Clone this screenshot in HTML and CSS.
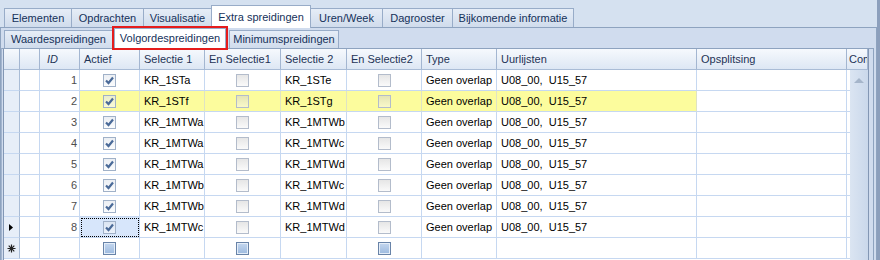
FILE: index.html
```html
<!DOCTYPE html>
<html lang="nl">
<head>
    <meta charset="UTF-8">
    <title>Extra spreidingen</title>
    <link rel="stylesheet" href="styles.css">
</head>
<body>
<div class="frame">
    <div class="tabs top-tabs">
        <div class="tab w67">Elementen</div>
        <div class="tab w73">Opdrachten</div>
        <div class="tab w69">Visualisatie</div>
        <div class="tab active w100">Extra spreidingen</div>
        <div class="tab w73">Uren/Week</div>
        <div class="tab w71">Dagrooster</div>
        <div class="tab w122">Bijkomende informatie</div>
    </div>
    <div class="outer-page">
        <div class="tabs sub-tabs">
            <div class="tab w109">Waardespreidingen</div>
            <div class="tab active marked w112">Volgordespreidingen</div>
            <div class="tab w110">Minimumspreidingen</div>
        </div>
        <div class="inner-page">
            <div class="grid">
                <table>
                    <colgroup>
                        <col style="width:16px"><col style="width:20px"><col style="width:40px"><col style="width:60px">
                        <col style="width:65px"><col style="width:76px"><col style="width:66px"><col style="width:75px">
                        <col style="width:75px"><col style="width:200px"><col style="width:150px"><col style="width:21px">
                    </colgroup>
                    <thead>
                        <tr>
                            <th></th><th></th><th class="id-head">ID</th><th>Actief</th><th>Selectie 1</th><th>En Selectie1</th>
                            <th>Selectie 2</th><th>En Selectie2</th><th>Type</th><th>Uurlijsten</th><th>Opsplitsing</th><th class="clip">Com</th>
                        </tr>
                    </thead>
                    <tbody>
                        <tr>
                            <td class="ind"></td><td></td><td class="num">1</td>
                            <td class="c"><span class="cb on"><svg viewBox="0 0 11 11"><path d="M2 5.5 L4.5 8 L9 2.5"/></svg></span></td>
                            <td>KR_1STa</td><td class="c"><span class="cb"></span></td>
                            <td>KR_1STe</td><td class="c"><span class="cb"></span></td>
                            <td>Geen overlap</td><td>U08_00,&nbsp; U15_57</td><td></td><td></td>
                        </tr>
                        <tr class="warn">
                            <td class="ind"></td><td></td><td class="num">2</td>
                            <td class="c hl"><span class="cb on"><svg viewBox="0 0 11 11"><path d="M2 5.5 L4.5 8 L9 2.5"/></svg></span></td>
                            <td class="hl">KR_1STf</td><td class="c hl"><span class="cb"></span></td>
                            <td class="hl">KR_1STg</td><td class="c hl"><span class="cb"></span></td>
                            <td class="hl">Geen overlap</td><td class="hl">U08_00,&nbsp; U15_57</td><td></td><td></td>
                        </tr>
                        <tr>
                            <td class="ind"></td><td></td><td class="num">3</td>
                            <td class="c"><span class="cb on"><svg viewBox="0 0 11 11"><path d="M2 5.5 L4.5 8 L9 2.5"/></svg></span></td>
                            <td>KR_1MTWa</td><td class="c"><span class="cb"></span></td>
                            <td>KR_1MTWb</td><td class="c"><span class="cb"></span></td>
                            <td>Geen overlap</td><td>U08_00,&nbsp; U15_57</td><td></td><td></td>
                        </tr>
                        <tr>
                            <td class="ind"></td><td></td><td class="num">4</td>
                            <td class="c"><span class="cb on"><svg viewBox="0 0 11 11"><path d="M2 5.5 L4.5 8 L9 2.5"/></svg></span></td>
                            <td>KR_1MTWa</td><td class="c"><span class="cb"></span></td>
                            <td>KR_1MTWc</td><td class="c"><span class="cb"></span></td>
                            <td>Geen overlap</td><td>U08_00,&nbsp; U15_57</td><td></td><td></td>
                        </tr>
                        <tr>
                            <td class="ind"></td><td></td><td class="num">5</td>
                            <td class="c"><span class="cb on"><svg viewBox="0 0 11 11"><path d="M2 5.5 L4.5 8 L9 2.5"/></svg></span></td>
                            <td>KR_1MTWa</td><td class="c"><span class="cb"></span></td>
                            <td>KR_1MTWd</td><td class="c"><span class="cb"></span></td>
                            <td>Geen overlap</td><td>U08_00,&nbsp; U15_57</td><td></td><td></td>
                        </tr>
                        <tr>
                            <td class="ind"></td><td></td><td class="num">6</td>
                            <td class="c"><span class="cb on"><svg viewBox="0 0 11 11"><path d="M2 5.5 L4.5 8 L9 2.5"/></svg></span></td>
                            <td>KR_1MTWb</td><td class="c"><span class="cb"></span></td>
                            <td>KR_1MTWc</td><td class="c"><span class="cb"></span></td>
                            <td>Geen overlap</td><td>U08_00,&nbsp; U15_57</td><td></td><td></td>
                        </tr>
                        <tr>
                            <td class="ind"></td><td></td><td class="num">7</td>
                            <td class="c"><span class="cb on"><svg viewBox="0 0 11 11"><path d="M2 5.5 L4.5 8 L9 2.5"/></svg></span></td>
                            <td>KR_1MTWb</td><td class="c"><span class="cb"></span></td>
                            <td>KR_1MTWd</td><td class="c"><span class="cb"></span></td>
                            <td>Geen overlap</td><td>U08_00,&nbsp; U15_57</td><td></td><td></td>
                        </tr>
                        <tr>
                            <td class="ind"><svg class="arrow" viewBox="0 0 4 7"><path d="M0 0 L4 3.5 L0 7 Z"/></svg></td><td></td><td class="num">8</td>
                            <td class="c focus"><span class="cb on"><svg viewBox="0 0 11 11"><path d="M2 5.5 L4.5 8 L9 2.5"/></svg></span></td>
                            <td>KR_1MTWc</td><td class="c"><span class="cb"></span></td>
                            <td>KR_1MTWd</td><td class="c"><span class="cb"></span></td>
                            <td>Geen overlap</td><td>U08_00,&nbsp; U15_57</td><td></td><td></td>
                        </tr>
                        <tr>
                            <td class="ind"><svg class="star" viewBox="0 0 9 9"><path d="M4.5 0.5 V8.5 M0.5 4.5 H8.5 M1.7 1.7 L7.3 7.3 M7.3 1.7 L1.7 7.3"/></svg></td><td></td><td></td>
                            <td class="c"><span class="cb null"></span></td>
                            <td></td><td class="c"><span class="cb null"></span></td>
                            <td></td><td class="c"><span class="cb null"></span></td>
                            <td></td><td></td><td></td><td></td>
                        </tr>
                    </tbody>
                </table>
                <div class="vscroll"><span class="up"></span></div>
            </div>
        </div>
    </div>
</div>
</body>
</html>
```

FILE: styles.css
```css
body {
    margin: 0;
    background: #d5e1f0;
    font-family: "Liberation Sans", Arial, sans-serif;
    font-size: 11px;
    color: #000;
}
.frame {
    width: 877px;
    height: 260px;
    border-right: 3px solid #8c9fbc;
    overflow: hidden;
}
.tabs {
    display: flex;
    align-items: flex-end;
}
.top-tabs {
    height: 23px;
    padding: 4px 0 0 4px;
}
.tab {
    box-sizing: border-box;
    height: 19px;
    line-height: 18px;
    padding: 0 2px;
    border: 1px solid #98acc8;
    border-bottom: none;
    margin-right: -1px;
    background: linear-gradient(#e6edf7, #d0dcec);
    color: #15315a;
    white-space: nowrap;
    text-align: center;
}
.tab.active {
    height: 23px;
    line-height: 21px;
    background: #fff;
    position: relative;
    z-index: 2;
    margin-bottom: -1px;
}
.top-tabs .tab.active {
    line-height: 22px;
}
.w67 { width: 68px; }
.w69 { width: 69px; }
.w71 { width: 71px; }
.w73 { width: 73px; }
.w100 { width: 100px; }
.w122 { width: 122px; }
.w109 { width: 109px; }
.w110 { width: 110px; }
.w112 { width: 112px; }
.outer-page {
    border-top: 1px solid #8ea3bf;
    border-left: 1px solid #8ea3bf;
    border-right: 1px solid #8ea3bf;
    background: #d0dcee;
    height: 240px;
}
.sub-tabs {
    height: 20px;
    padding: 0 0 0 3px;
}
.sub-tabs .tab {
    height: 18px;
    line-height: 17px;
}
.sub-tabs .tab.active {
    height: 20px;
    line-height: 19px;
}
.tab.marked {
    outline: 2px solid #e51c1c;
    outline-offset: 0;
    margin: 0 3px 0 2px;
}
.inner-page {
    border-top: 1px solid #8ea3bf;
    border-left: 1px solid #a3b5cf;
    border-right: 1px solid #8ea3bf;
    margin-right: 2px;
    padding: 0 4px 0 1px;
    height: 230px;
}
.grid {
    position: relative;
    width: 864px;
    border-left: 1px solid #8397b4;
    border-right: 1px solid #8397b4;
    background: #fff;
    overflow: hidden;
    height: 230px;
}
table {
    table-layout: fixed;
    width: 864px;
    border-collapse: separate;
    border-spacing: 0;
}
th, td {
    height: 21px;
    box-sizing: border-box;
    padding: 0 4px;
    border-right: 1px solid #c6d8f1;
    border-bottom: 1px solid #c6d8f1;
    white-space: nowrap;
    overflow: hidden;
    text-align: left;
    line-height: 20px;
}
th {
    font-weight: normal;
    color: #1e3356;
    background: linear-gradient(#f6f9fd, #dde7f4);
    border-right: 1px solid #a3b6d1;
    border-bottom: 1px solid #a9bcd6;
}
th.id-head {
    font-style: italic;
    padding-left: 7px;
}
th.clip {
    padding-left: 2px;
    text-overflow: clip;
}
td.ind {
    background: #e7eef8;
    border-right-color: #a9bcd6;
    padding: 0;
    text-align: center;
}
td.num {
    text-align: right;
    color: #4d4d4d;
    padding-right: 2px;
}
td.c {
    text-align: center;
    padding: 0;
}
td.hl {
    background: #fcfc9d;
    border-right-color: #dfe3c3;
}
td.focus {
    background: #d7e6fb;
    outline: 1px dotted #000;
    outline-offset: -2px;
}
.cb {
    display: inline-block;
    width: 13px;
    height: 13px;
    box-sizing: border-box;
    border: 1px solid #b3bccb;
    background: linear-gradient(rgba(205, 205, 205, 0.5), rgba(245, 245, 245, 0.5));
    vertical-align: middle;
    margin-top: -2px;
}
.cb.on {
    border-color: #a0b1c8;
    background: linear-gradient(rgba(222, 228, 236, 0.6), rgba(248, 250, 252, 0.6));
}
.cb svg {
    display: block;
    width: 11px;
    height: 11px;
}
.cb svg path {
    fill: none;
    stroke: #4a6a98;
    stroke-width: 2.2;
}
.cb.null {
    border-color: #6883a8;
    background: linear-gradient(#c4d7ef, #9cb9de);
    box-shadow: inset 0 0 0 1px #e4edf8;
}
.arrow {
    display: block;
    width: 4px;
    height: 7px;
    margin: 0 0 0 5px;
    fill: #000;
}
.star {
    display: block;
    width: 9px;
    height: 9px;
    margin: 0 0 0 3px;
    stroke: #222;
    stroke-width: 1.2;
}
.vscroll {
    position: absolute;
    top: 21px;
    right: 0;
    bottom: 0;
    width: 18px;
    background: linear-gradient(90deg, #dbe5f2, #cad8eb);
}
.up {
    position: absolute;
    top: 8px;
    left: 4px;
    width: 0;
    height: 0;
    border-left: 5px solid transparent;
    border-right: 5px solid transparent;
    border-bottom: 5px solid #a5b5ca;
}
```
